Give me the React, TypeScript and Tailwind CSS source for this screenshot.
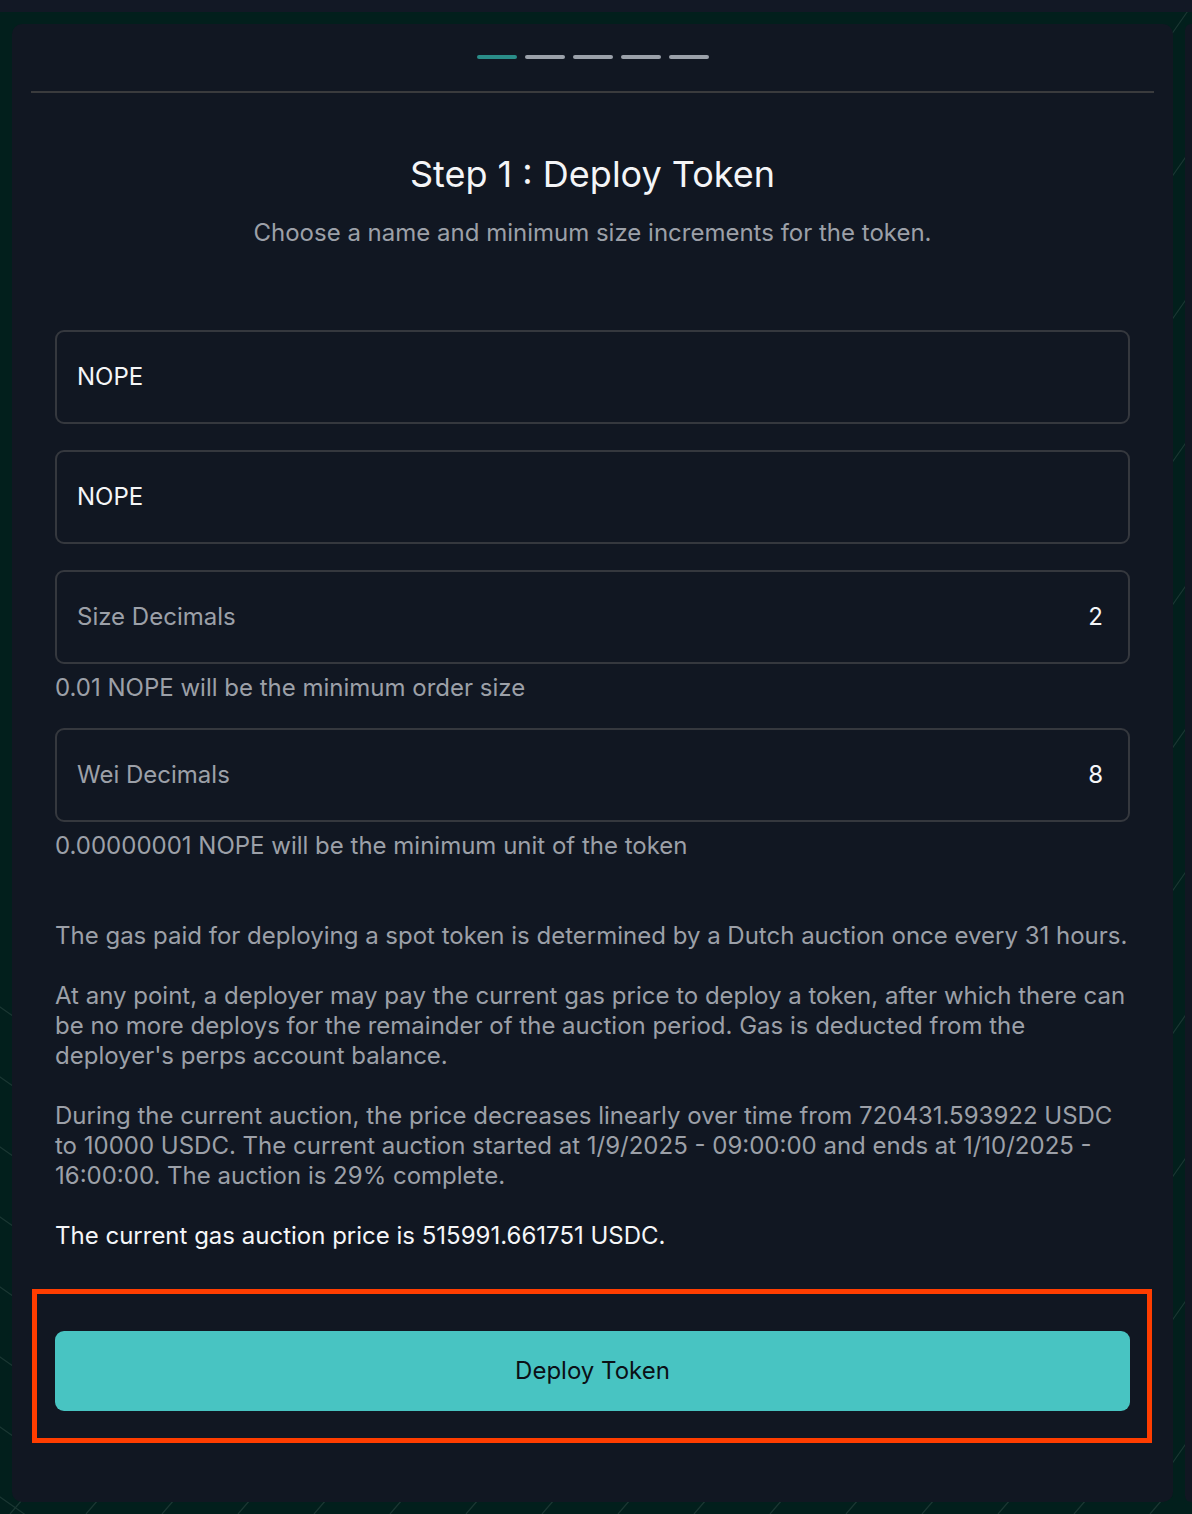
import React from "react";

function BgLines() {
  const left: JSX.Element[] = [];
  for (let i = 0; i < 8; i++) {
    const y = 1000 + i * 70;
    left.push(<line key={"l" + i} x1={-10} y1={y} x2={40} y2={y + 35} stroke="#1b3733" strokeWidth={1.2} />);
  }
  const right: JSX.Element[] = [];
  for (let i = 0; i < 24; i++) {
    const y = 15 + i * 143;
    right.push(<line key={"r" + i} x1={1150} y1={y + 50} x2={1192} y2={y - 10} stroke="#1b3733" strokeWidth={1.2} />);
  }
  const bottom: JSX.Element[] = [];
  for (let i = 0; i < 20; i++) {
    const x = 10 + i * 76;
    bottom.push(<line key={"b" + i} x1={x} y1={1514} x2={x + 12} y2={1500} stroke="#1b3733" strokeWidth={1.2} />);
  }
  return (
    <svg className="absolute inset-0 pointer-events-none" width={1192} height={1514}>
      {left}
      {right}
      {bottom}
    </svg>
  );
}

function Field({ label, value, placeholder }: { label?: string; value?: string; placeholder?: boolean }) {
  return (
    <div className="h-[94px] w-full rounded-[9px] border-2 border-[#35383e] flex items-center justify-between pl-[20px] pr-[25px]">
      <span className={placeholder ? "text-[#9ca0a8]" : "text-[#f5f6f8]"}>{label}</span>
      {value ? <span className="text-[#f5f6f8]">{value}</span> : null}
    </div>
  );
}

export default function App() {
  return (
    <div
      className="relative w-[1192px] h-[1514px] bg-[#021f1c] overflow-hidden"
      style={{ fontFamily: "Inter, 'Noto Sans', sans-serif" }}
    >
      <BgLines />
      <div className="relative flex flex-col">
        <div className="h-[12px] bg-[#121825]" />
        <div className="flex pl-[12px] pt-[12px] gap-[12px]">
          <div className="w-[1161px] h-[1478px] rounded-[10px] bg-[#111722] flex flex-col">
            <div className="flex justify-center gap-[8px] pt-[31px]">
              <div className="w-[40px] h-[4px] rounded-full bg-[#2a8d89]" />
              <div className="w-[40px] h-[4px] rounded-full bg-[#9ba1aa]" />
              <div className="w-[40px] h-[4px] rounded-full bg-[#9ba1aa]" />
              <div className="w-[40px] h-[4px] rounded-full bg-[#9ba1aa]" />
              <div className="w-[40px] h-[4px] rounded-full bg-[#9ba1aa]" />
            </div>
            <div className="mt-[32px] mx-[19px] h-[2px] bg-[#3a3b3d]" />
            <h1 className="mt-[59px] text-center text-[36px] leading-[44px] text-[#f4f5f7]">Step 1 : Deploy Token</h1>
            <p className="mt-[22px] text-center text-[24px] leading-[30px] text-[#9ca0a8]">
              Choose a name and minimum size increments for the token.
            </p>
            <div className="px-[43px] mt-[82px] flex flex-col text-[24px] leading-[30px]">
              <Field label="NOPE" />
              <div className="mt-[26px]">
                <Field label="NOPE" />
              </div>
              <div className="mt-[26px]">
                <Field label="Size Decimals" value="2" placeholder />
              </div>
              <p className="mt-[9px] text-[#9ca0a8]">0.01 NOPE will be the minimum order size</p>
              <div className="mt-[25px]">
                <Field label="Wei Decimals" value="8" placeholder />
              </div>
              <p className="mt-[9px] text-[#9ca0a8]">0.00000001 NOPE will be the minimum unit of the token</p>
              <p className="mt-[60px] text-[#9ca0a8]">
                The gas paid for deploying a spot token is determined by a Dutch auction once every 31 hours.
              </p>
              <p className="mt-[30px] text-[#9ca0a8]">
                At any point, a deployer may pay the current gas price to deploy a token, after which there can be no more deploys for the remainder of the auction period. Gas is deducted from the deployer's perps account balance.
              </p>
              <p className="mt-[30px] text-[#9ca0a8]">
                During the current auction, the price decreases linearly over time from 720431.593922 USDC to 10000 USDC. The current auction started at 1/9/2025 - 09:00:00 and ends at 1/10/2025 - 16:00:00. The auction is 29% complete.
              </p>
              <p className="mt-[30px] text-[#f5f6f8]">The current gas auction price is 515991.661751 USDC.</p>
              <div className="relative mt-[80px]">
                <button className="w-full h-[80px] rounded-[9px] bg-[#48c4c2] text-[#0b1016] text-[24px]">
                  Deploy Token
                </button>
                <div className="absolute left-[-23px] right-[-22px] top-[-42px] bottom-[-32px] border-[5px] border-[#ff3d00] pointer-events-none" />
              </div>
            </div>
          </div>
          <div className="w-[7px] h-[1478px] bg-[#111722] rounded-l-[6px]" />
        </div>
      </div>
    </div>
  );
}
